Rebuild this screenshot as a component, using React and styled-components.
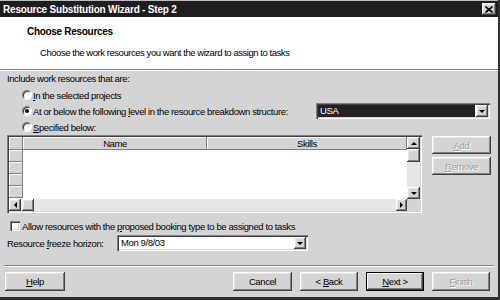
import React from 'react';
import styled, { createGlobalStyle, css } from 'styled-components';

const FONT = `"Liberation Sans", Arial, sans-serif`;

const GlobalStyle = createGlobalStyle`
  html, body { margin: 0; padding: 0; background: #d4d4d4; overflow: hidden; }
  * { box-sizing: border-box; }
`;

const raised = css`
  box-shadow: inset -1px -1px #404040, inset 1px 1px #ffffff, inset -2px -2px #808080, inset 2px 2px #e4e4e4;
`;

const sunken = css`
  box-shadow: inset 1px 1px #808080, inset 2px 2px #404040, inset -1px -1px #ffffff, inset -2px -2px #d4d4d4;
`;

const Window = styled.div`
  width: 500px;
  height: 300px;
  display: flex;
  flex-direction: column;
  background: #d4d4d4;
  font-family: ${FONT};
  font-size: 9.5px;
  letter-spacing: -0.4px;
  color: #000;
  border-right: 2px solid #303030;
  border-bottom: 3px solid #303030;
  overflow: hidden;
`;

const TitleBar = styled.div`
  height: 17px;
  flex: none;
  display: flex;
  align-items: center;
  justify-content: space-between;
  padding: 0 2px 0 3px;
  background: #1e1e1e;
  border-top: 1px solid #bdbdbd;
  color: #fff;
  font-weight: bold;
  font-size: 10px;
  letter-spacing: -0.2px;
`;

const CloseBox = styled.div`
  width: 14px;
  height: 12px;
  background: #d4d4d4;
  ${raised};
  display: flex;
  align-items: center;
  justify-content: center;
`;

const Header = styled.div`
  height: 52px;
  flex: none;
  background: #fff;
  padding: 9px 0 0 27px;
`;

const HeaderTitle = styled.div`
  font-weight: bold;
  font-size: 10px;
  letter-spacing: -0.3px;
  line-height: 12px;
`;

const HeaderText = styled.div`
  line-height: 12px;
  margin: 9px 0 0 13px;
  letter-spacing: -0.45px;
`;

const Separator = styled.div`
  height: 2px;
  flex: none;
  border-top: 1px solid #808080;
  border-bottom: 1px solid #ffffff;
  margin: ${p => p.$inset ? '0 4px' : '0'};
`;

const Body = styled.div`
  flex: 1;
  display: flex;
  flex-direction: column;
  padding: 2px 8px 0 7px;
`;

const Line = styled.div`
  line-height: 12px;
  height: 12px;
`;

const RadioGroup = styled.div`
  margin-top: 2px;
  padding-left: 15px;
  display: flex;
  flex-direction: column;
`;

const OptionRow = styled.label`
  height: 16px;
  display: flex;
  align-items: center;
`;

const RadioDot = styled.span`
  width: 10px;
  height: 10px;
  border-radius: 50%;
  background: #fff;
  border: 1px solid;
  border-color: #707070 #ffffff #ffffff #707070;
  box-shadow: inset 1px 1px #404040;
  margin-right: 1px;
  display: flex;
  align-items: center;
  justify-content: center;
  flex: none;
  &::after {
    content: '';
    width: 4px;
    height: 4px;
    border-radius: 50%;
    background: ${p => p.$checked ? '#000' : 'transparent'};
  }
`;

const Key = styled.span`
  text-decoration: underline;
`;

const Combo = styled.div`
  width: ${p => p.$w}px;
  height: 16px;
  margin-left: auto;
  background: #fff;
  ${sunken};
  padding: 2px;
  display: flex;
`;

const ComboValue = styled.div`
  flex: 1;
  display: flex;
  align-items: center;
  padding-left: 2px;
  line-height: 12px;
  background: ${p => p.$selected ? '#222' : 'transparent'};
  color: ${p => p.$selected ? '#fff' : '#000'};
  margin-right: 1px;
`;

const ArrowButton = styled.div`
  width: ${p => p.$w || 12}px;
  height: ${p => p.$h || 12}px;
  flex: none;
  background: #d4d4d4;
  ${raised};
  display: flex;
  align-items: center;
  justify-content: center;
`;

const Tri = styled.span`
  width: 0;
  height: 0;
  border: 3px solid transparent;
  ${p => p.$dir === 'down' && css`border-top: 3px solid #000; border-bottom: 0; margin-top: 1px;`}
  ${p => p.$dir === 'up' && css`border-bottom: 3px solid #000; border-top: 0;`}
  ${p => p.$dir === 'left' && css`border-right: 3px solid #000; border-left: 0;`}
  ${p => p.$dir === 'right' && css`border-left: 3px solid #000; border-right: 0;`}
`;

const ListArea = styled.div`
  display: flex;
  align-items: flex-start;
`;

const GridFrame = styled.div`
  width: 415px;
  height: 78px;
  flex: none;
  display: grid;
  grid-template-columns: 1fr 13px;
  grid-template-rows: 1fr 12px;
  background: #fff;
  ${sunken};
  padding: 2px;
`;

const Table = styled.div`
  display: flex;
  flex-direction: column;
  overflow: hidden;
`;

const TableRow = styled.div`
  display: flex;
  height: ${p => p.$h}px;
  flex: none;
`;

const HeadCell = styled.div`
  width: ${p => p.$w ? `${p.$w}px` : 'auto'};
  flex: ${p => p.$w ? 'none' : '1'};
  background: #d4d4d4;
  box-shadow: inset -1px -1px #808080, inset 1px 1px #ffffff;
  display: flex;
  align-items: center;
  justify-content: center;
  line-height: 12px;
`;

const DataCell = styled.div`
  flex: 1;
  background: #fff;
`;

const VScroll = styled.div`
  display: flex;
  flex-direction: column;
  background: #e6e6e6;
`;

const HScroll = styled.div`
  display: flex;
  background: #e6e6e6;
`;

const Thumb = styled.div`
  width: ${p => p.$w}px;
  height: ${p => p.$h}px;
  margin-left: ${p => p.$gap || 0}px;
  flex: none;
  background: #d4d4d4;
  ${raised};
`;

const Track = styled.div`
  flex: 1;
`;

const Corner = styled.div`
  background: #d4d4d4;
`;

const SideButtons = styled.div`
  margin: 1px 0 0 10px;
  display: flex;
  flex-direction: column;
  gap: 3px;
`;

const Button = styled.div`
  width: ${p => p.$w || 58}px;
  height: ${p => p.$h || 19}px;
  flex: none;
  display: flex;
  align-items: center;
  justify-content: center;
  white-space: pre;
  background: #d4d4d4;
  color: ${p => p.$disabled ? '#9c9c9c' : '#000'};
  text-shadow: ${p => p.$disabled ? '1px 1px 0 #ffffff' : 'none'};
  ${raised};
  ${p => p.$default && css`
    border: 1px solid #000;
    box-shadow: inset -1px -1px #404040, inset 1px 1px #ffffff, inset -2px -2px #808080;
  `}
`;

const CheckRow = styled.label`
  margin-top: 6px;
  height: 14px;
  display: flex;
  align-items: center;
  padding-left: 3px;
`;

const CheckBox = styled.span`
  width: 10px;
  height: 10px;
  flex: none;
  background: #fff;
  ${sunken};
  margin-right: 2px;
`;

const FieldRow = styled.div`
  margin-top: 2px;
  height: 16px;
  display: flex;
  align-items: center;
`;

const FieldLabel = styled.span`
  width: 110px;
  flex: none;
`;

const Footer = styled.div`
  height: 30px;
  flex: none;
  display: flex;
  align-items: flex-start;
  padding: 5px 8px 0 5px;
  gap: 8px;
`;

const Spacer = styled.div`
  flex: 1;
`;

export default function App() {
  return (
    <>
      <GlobalStyle />
      <Window>
        <TitleBar>
          <span>Resource Substitution Wizard - Step 2</span>
          <CloseBox>
            <svg width="8" height="7" viewBox="0 0 8 7">
              <path d="M0.5 0.5 L7.5 6.5 M7.5 0.5 L0.5 6.5" stroke="#000" strokeWidth="1.6" />
            </svg>
          </CloseBox>
        </TitleBar>
        <Header>
          <HeaderTitle>Choose Resources</HeaderTitle>
          <HeaderText>Choose the work resources you want the wizard to assign to tasks</HeaderText>
        </Header>
        <Separator />
        <Body>
          <Line>Include work resources that are:</Line>
          <RadioGroup>
            <OptionRow>
              <RadioDot />
              <span><Key>I</Key>n the selected projects</span>
            </OptionRow>
            <OptionRow>
              <RadioDot $checked />
              <span>At or below the following <Key>l</Key>evel in the resource breakdown structure:</span>
              <Combo $w={174}>
                <ComboValue $selected>USA</ComboValue>
                <ArrowButton $h={12}><Tri $dir="down" /></ArrowButton>
              </Combo>
            </OptionRow>
            <OptionRow>
              <RadioDot />
              <span><Key>S</Key>pecified below:</span>
            </OptionRow>
          </RadioGroup>
          <ListArea>
            <GridFrame>
              <Table>
                <TableRow $h={13}>
                  <HeadCell $w={14} />
                  <HeadCell $w={184}>Name</HeadCell>
                  <HeadCell>Skills</HeadCell>
                </TableRow>
                {[0, 1, 2, 3].map(i => (
                  <TableRow key={i} $h={12}>
                    <HeadCell $w={14} />
                    <DataCell />
                  </TableRow>
                ))}
              </Table>
              <VScroll>
                <ArrowButton $w={13} $h={12}><Tri $dir="up" /></ArrowButton>
                <Thumb $w={13} $h={13} />
                <Track />
                <ArrowButton $w={13} $h={12}><Tri $dir="down" /></ArrowButton>
              </VScroll>
              <HScroll>
                <ArrowButton $w={12} $h={12}><Tri $dir="left" /></ArrowButton>
                <Thumb $w={12} $h={12} $gap={1} />
                <Track />
                <ArrowButton $w={11} $h={12}><Tri $dir="right" /></ArrowButton>
              </HScroll>
              <Corner />
            </GridFrame>
            <SideButtons>
              <Button $w={59} $h={18} $disabled><span><Key>A</Key>dd</span></Button>
              <Button $w={59} $h={18} $disabled><span><Key>R</Key>emove</span></Button>
            </SideButtons>
          </ListArea>
          <CheckRow>
            <CheckBox />
            <span>Allow resources with the <Key>p</Key>roposed booking type to be assigned to tasks</span>
          </CheckRow>
          <FieldRow>
            <FieldLabel>Resource <Key>f</Key>reeze horizon:</FieldLabel>
            <Combo $w={191} style={{ marginLeft: 0 }}>
              <ComboValue>Mon 9/8/03</ComboValue>
              <ArrowButton $h={12}><Tri $dir="down" /></ArrowButton>
            </Combo>
          </FieldRow>
        </Body>
        <Separator $inset />
        <Footer>
          <Button $w={60}><span><Key>H</Key>elp</span></Button>
          <Spacer />
          <Button $w={59}>Cancel</Button>
          <Button $w={58}><span>&lt; <Key>B</Key>ack</span></Button>
          <Button $w={58} $default><span><Key>N</Key>ext &gt;</span></Button>
          <Button $w={58} $disabled><span><Key>F</Key>inish</span></Button>
        </Footer>
      </Window>
    </>
  );
}
